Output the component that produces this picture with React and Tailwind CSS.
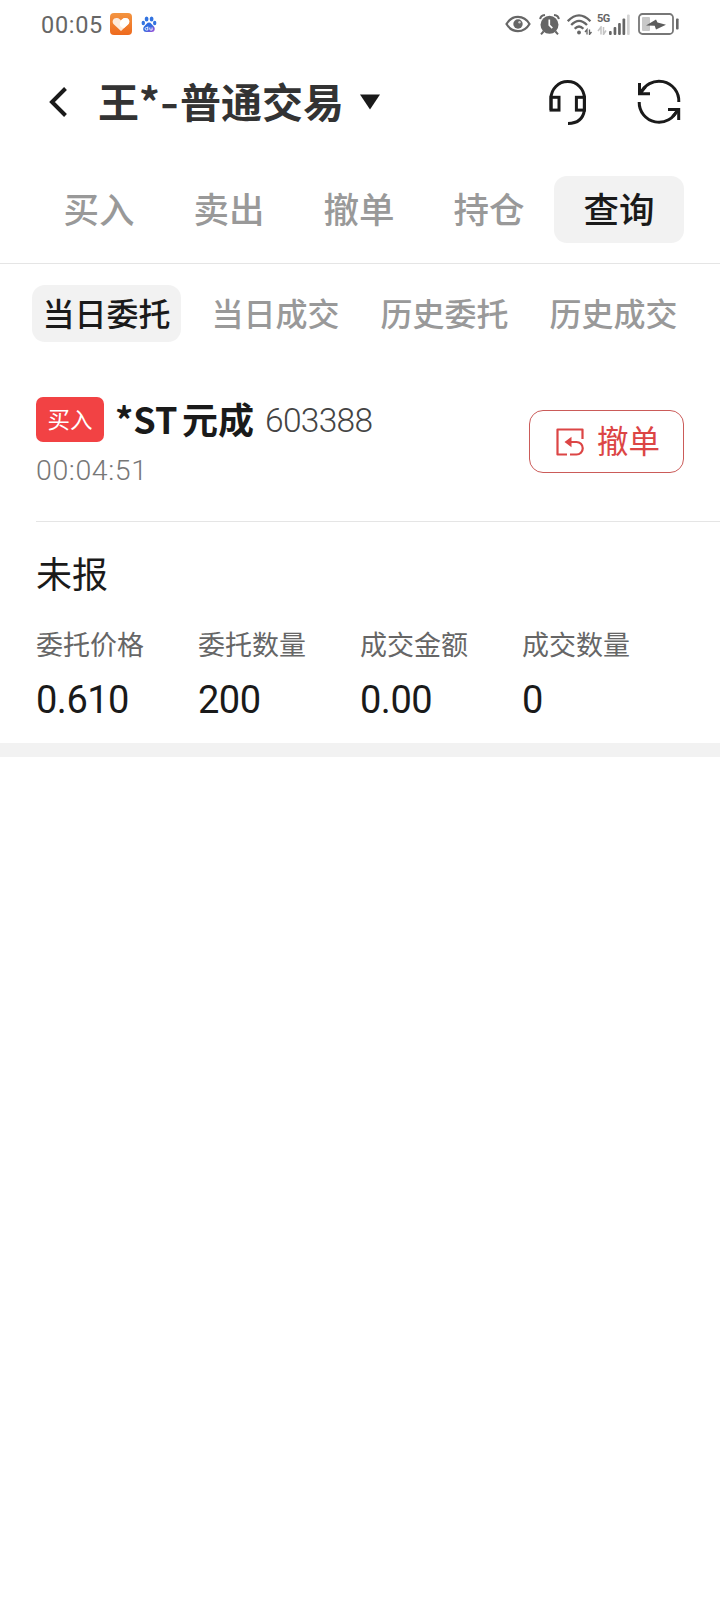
const tabs = ['买入', '卖出', '撤单', '持仓', '查询']

const subTabs = ['当日委托', '当日成交', '历史委托', '历史成交']

const order = {
  side: '买入',
  name: '元成',
  code: '603388',
  time: '00:04:51',
  status: '未报',
  fields: [
    { label: '委托价格', value: '0.610' },
    { label: '委托数量', value: '200' },
    { label: '成交金额', value: '0.00' },
    { label: '成交数量', value: '0' },
  ],
}

function HeartAppIcon() {
  return (
    <svg width="22" height="22" viewBox="0 0 22 22">
      <defs>
        <linearGradient id="heartBg" x1="0" y1="0" x2="0" y2="1">
          <stop offset="0" stopColor="#f39440" />
          <stop offset="1" stopColor="#ee6a1e" />
        </linearGradient>
      </defs>
      <rect width="22" height="22" rx="4" fill="url(#heartBg)" />
      <path d="M11 18 4 11.500C1 8.500 3.500 4.500 7 5c2 .3 3.200 1.300 4 2.500C11.800 6.300 13 5.300 15 5c3.500-.5 6 3.500 3 6.500z" fill="#fdeadb" />
      <path d="M11 7.500C11.800 6.300 13 5.300 15 5c3.500-.5 6 3.500 3 6.500l-4 3.500c-3 0-6-3-3-7.500z" fill="#fff" />
    </svg>
  )
}

function PawIcon() {
  return (
    <svg width="16" height="17" viewBox="0 0 16 17">
      <defs>
        <linearGradient id="paw" x1="0" y1="0" x2="1" y2="1">
          <stop offset="0.500" stopColor="#2f6be0" />
          <stop offset="1" stopColor="#b04fd8" />
        </linearGradient>
      </defs>
      <ellipse cx="5.600" cy="3" rx="1.900" ry="2.600" fill="#3273e0" />
      <ellipse cx="10.600" cy="3" rx="1.900" ry="2.600" fill="#3273e0" />
      <ellipse cx="2.300" cy="7" rx="1.700" ry="2.200" fill="#3273e0" />
      <ellipse cx="13.700" cy="7" rx="1.700" ry="2.200" fill="#3273e0" />
      <path d="M8 6.500c2 0 2.800 2 4.200 3.200 2.800 2.300 1.600 6.300-1.400 6.300H5.200c-3 0-4.200-4-1.400-6.300C5.200 8.500 6 6.500 8 6.500z" fill="url(#paw)" />
      <path d="M6.800 10.500v3.500H5.300a1.200 1.200 0 0 1 0-2.400h1.500M8.800 11.500v1.700q0 .8 .8.800h1.500v-2.500" fill="none" stroke="#fff" strokeWidth="0.900" />
    </svg>
  )
}

function EyeIcon() {
  return (
    <svg width="26" height="18" viewBox="0 0 26 18" fill="none" stroke="#666">
      <path d="M1.500 9C7-.5 19-.5 24.500 9 19 18.500 7 18.500 1.500 9z" strokeWidth="2.200" />
      <circle cx="13" cy="9" r="4.700" fill="#666" stroke="none" />
      <circle cx="14.500" cy="7.200" r="1.200" fill="#ccc" stroke="none" />
    </svg>
  )
}

function AlarmIcon() {
  return (
    <svg width="21" height="21" viewBox="0 0 21 21" fill="none" stroke="#666">
      <circle cx="10.500" cy="10.800" r="9" fill="#666" stroke="none" />
      <path d="M1.200 5.200Q1.500 1.500 6 1M19.800 5.200Q19.500 1.500 15 1" strokeWidth="2" />
      <path d="M4.500 17.500 2 20.300M16.500 17.500l2.500 2.800" strokeWidth="2" />
      <path d="M10.300 5.500v5.700l3 3" stroke="#fff" strokeWidth="1.700" />
    </svg>
  )
}

function WifiIcon() {
  return (
    <svg width="26" height="21" viewBox="0 0 26 21" fill="none" stroke="#666" strokeWidth="2.300">
      <path d="M.8 7.200Q12 -4.500 23.400 7.200" />
      <path d="M4.200 11Q12 2.600 20 11" />
      <path d="M7.700 14.800Q12 10.200 16.400 14.800" />
      <circle cx="12" cy="18.500" r="1.900" fill="#666" stroke="none" />
      <path d="M20 20.500v-5l-2 2.500M22.500 15.500v5l2-2.500" strokeWidth="1.300" />
    </svg>
  )
}

function SignalIcon() {
  return (
    <div className="flex h-[22px] w-[33px] items-end">
      <div className="flex h-full w-3 flex-col justify-between">
        <span className="font-['Roboto'] text-[11px] font-bold leading-[11px] tracking-[-0.5px] text-[#666]">5G</span>
        <svg width="10" height="9" viewBox="0 0 10 9" fill="none" stroke="#c4c4c4" strokeWidth="1.500">
          <path d="M4 8.500V1L1 5M6.500 1v7.500L9 4.500" />
        </svg>
      </div>
      <svg width="21" height="21" viewBox="0 0 21 21" fill="#666">
        <rect x="0" y="17" width="2.700" height="4" rx="1" />
        <rect x="4.600" y="13" width="2.700" height="8" rx="1" />
        <rect x="9.100" y="9" width="2.700" height="12" rx="1" />
        <rect x="13.500" y="4.500" width="2.700" height="16.500" rx="1" />
        <rect x="18" y="0.500" width="2.700" height="20.500" rx="1" fill="#d4d4d4" />
      </svg>
    </div>
  )
}

function BatteryIcon() {
  return (
    <svg width="41" height="22" viewBox="0 0 41 22">
      <rect x="1" y="1" width="34" height="20" rx="3.500" fill="none" stroke="#777" strokeWidth="1.800" />
      <rect x="4" y="4" width="8" height="14" rx="1" fill="#c8c8c8" />
      <path d="M8 12.500 18 6.500l1.500 3 8.500 2.200L18 16.500l-1.300-3.800z" fill="#5c5c5c" />
      <rect x="38" y="5.500" width="2.600" height="11" rx="0.800" fill="#666" />
    </svg>
  )
}

function StatusBar() {
  return (
    <div className="flex h-12 items-center pl-[41px] pr-[41px]">
      <span className="w-[69px] pt-[3px] font-['Roboto'] text-[23.5px] leading-none tracking-[0.7px] text-[#666]">00:05</span>
      <HeartAppIcon />
      <span className="ml-[9px]">
        <PawIcon />
      </span>
      <div className="ml-auto flex items-center">
        <EyeIcon />
        <span className="ml-2"><AlarmIcon /></span>
        <span className="ml-[7px]"><WifiIcon /></span>
        <span className="ml-1"><SignalIcon /></span>
        <span className="ml-2"><BatteryIcon /></span>
      </div>
    </div>
  )
}

function Header() {
  return (
    <div className="flex h-[108px] items-center pl-[48px] pr-[38px]">
      <svg width="20" height="32" viewBox="0 0 20 32" fill="none" stroke="#1a1a1a" strokeWidth="4">
        <path d="M17.500 2.500 4 16l13.500 13.500" />
      </svg>
      <h1 className="ml-[30px] flex pb-[3px] text-[41px] font-bold leading-none text-[#333]">
        <span>王</span>
        <span className="w-[21px]">*</span>
        <span className="w-[20px] origin-left scale-x-125">-</span>
        <span>普通交易</span>
      </h1>
      <svg className="ml-4" width="20" height="16" viewBox="0 0 20 16" fill="#1a1a1a">
        <path d="M0 .5h20L10 15.500z" />
      </svg>
      <div className="ml-auto flex items-center gap-[47px]">
        <svg width="40" height="48" viewBox="0 0 40 48" fill="none" stroke="#1a1a1a" strokeWidth="3">
          <path d="M2 32V20.300a16.700 16.700 0 0 1 33.400 0V32Q33.500 45.400 19 45.400" />
          <rect x="2" y="19.300" width="8" height="12.800" />
          <rect x="27.400" y="19.300" width="8" height="12.800" />
        </svg>
        <svg width="46" height="48" viewBox="0 0 46 48" fill="none" stroke="#1a1a1a" strokeWidth="3">
          <path d="M42.800 24A19.800 19.800 0 0 0 4.500 16M3.200 24A19.800 19.800 0 0 0 41.500 31.500" />
          <path d="M3.500 5V15.700H14M42.700 42V31.500H32" />
          <path d="M3.500 15.700l6-7M42.700 31.500l-6 7" />
        </svg>
      </div>
    </div>
  )
}

function CancelButton() {
  return (
    <button className="flex h-[63px] w-[155px] items-center rounded-[14px] border border-[#cb5b59] pl-[26px] text-[31.5px] leading-none text-[#dc4545]">
      <svg className="mr-[13px]" width="28" height="28" viewBox="0 0 28 28" fill="none" stroke="currentColor" strokeWidth="2.200">
        <path d="M11 26.500H1.500V1.500h25V11" strokeLinejoin="round" />
        <path d="M15 14h5.500a6 6 0 0 1 0 12.500h-6.500" />
        <path d="M8.500 14l7-5.300v10.600z" fill="currentColor" stroke="none" />
      </svg>
      <span className="pb-[3px]">撤单</span>
    </button>
  )
}

function OrderCard() {
  return (
    <section>
      <div className="ml-9 flex h-[160px] border-b border-[#e5e5e5] pr-9">
        <div className="pt-[35px]">
          <div className="flex h-[45px] items-center">
            <span className="flex h-[45px] w-[68px] items-center justify-center rounded-[7px] bg-[#f24244] pb-0.5 text-[22.5px] leading-none text-white">
              {order.side}
            </span>
            <span className="ml-[11px] w-[67px] pb-[3px] text-[36px] font-bold leading-none text-[#1a1a1a]">*ST</span>
            <span className="w-[83px] pb-[3px] text-[36px] font-bold leading-none text-[#1a1a1a]">{order.name}</span>
            <span className="pt-0.5 font-['Roboto'] text-[33.5px] font-light leading-none tracking-[-0.7px] text-[#444]">{order.code}</span>
          </div>
          <div className="mt-3.5 font-['Roboto'] text-[28.5px] font-light leading-[30px] tracking-[0.6px] text-[#777]">{order.time}</div>
        </div>
        <div className="ml-auto pt-12">
          <CancelButton />
        </div>
      </div>
      <div className="h-[221px] pl-9 pt-8">
        <div className="text-[36px] leading-[36px] text-[#1a1a1a]">{order.status}</div>
        <div className="mt-10 grid grid-cols-[repeat(4,162px)]">
          {order.fields.map((field) => (
            <div key={field.label}>
              <div className="text-[27px] leading-[27px] text-[#666]">{field.label}</div>
              <div className="mt-6 font-['Roboto'] text-[38px] leading-[38px] tracking-[-0.5px] text-[#1a1a1a]">{field.value}</div>
            </div>
          ))}
        </div>
      </div>
    </section>
  )
}

export default function App() {
  return (
    <div className="min-h-[1612px] w-[720px] bg-white font-['Noto_Sans_CJK_SC',sans-serif]">
      <StatusBar />
      <Header />
      <nav className="flex h-[108px] border-b border-[#e5e5e5] pl-[34px] pt-5">
        {tabs.map((tab) => (
          <button
            key={tab}
            className={`flex h-[67px] w-[130px] items-center justify-center rounded-[13px] pb-[3px] text-[35.5px] font-medium leading-none ${
              tab === '查询' ? 'bg-[#f2f2f2] text-[#1a1a1a]' : 'text-[#999]'
            }`}
          >
            {tab}
          </button>
        ))}
      </nav>
      <nav className="flex h-[98px] gap-5 pl-8 pt-[21px]">
        {subTabs.map((tab, i) => (
          <button
            key={tab}
            className={`flex h-[57px] w-[149px] shrink-0 items-center justify-center rounded-[13px] pb-[3px] text-[32px] font-medium leading-none ${
              i === 0 ? 'bg-[#f2f2f2] text-[#1a1a1a]' : 'text-[#999]'
            }`}
          >
            {tab}
          </button>
        ))}
      </nav>
      <OrderCard />
      <div className="h-3.5 bg-[#f2f2f2]" />
    </div>
  )
}
